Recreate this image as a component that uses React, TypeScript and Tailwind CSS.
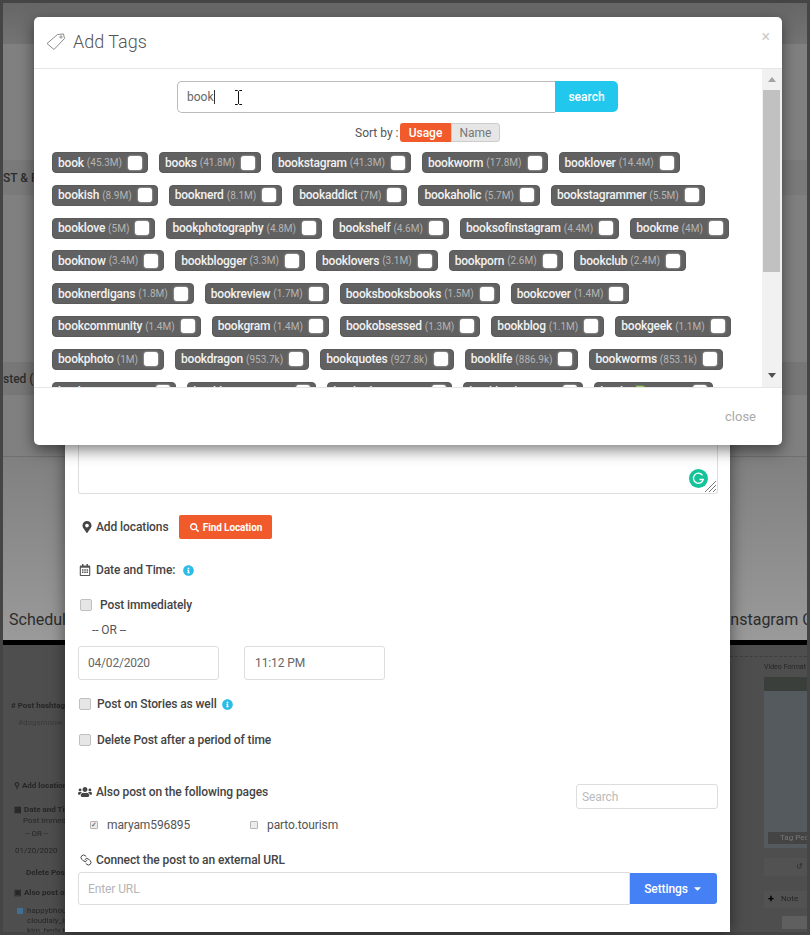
import { FaCaretDown, FaInfoCircle, FaMapMarkerAlt, FaRegCalendarAlt, FaSearch, FaUsers } from 'react-icons/fa'
import { Link as LinkIcon } from 'lucide-react'

type TagItem = { name: string; count: string }

const TAG_ROWS: TagItem[][] = [
  [
    { name: 'book', count: '45.3M' },
    { name: 'books', count: '41.8M' },
    { name: 'bookstagram', count: '41.3M' },
    { name: 'bookworm', count: '17.8M' },
    { name: 'booklover', count: '14.4M' },
  ],
  [
    { name: 'bookish', count: '8.9M' },
    { name: 'booknerd', count: '8.1M' },
    { name: 'bookaddict', count: '7M' },
    { name: 'bookaholic', count: '5.7M' },
    { name: 'bookstagrammer', count: '5.5M' },
  ],
  [
    { name: 'booklove', count: '5M' },
    { name: 'bookphotography', count: '4.8M' },
    { name: 'bookshelf', count: '4.6M' },
    { name: 'booksofinstagram', count: '4.4M' },
    { name: 'bookme', count: '4M' },
  ],
  [
    { name: 'booknow', count: '3.4M' },
    { name: 'bookblogger', count: '3.3M' },
    { name: 'booklovers', count: '3.1M' },
    { name: 'bookporn', count: '2.6M' },
    { name: 'bookclub', count: '2.4M' },
  ],
  [
    { name: 'booknerdigans', count: '1.8M' },
    { name: 'bookreview', count: '1.7M' },
    { name: 'booksbooksbooks', count: '1.5M' },
    { name: 'bookcover', count: '1.4M' },
  ],
  [
    { name: 'bookcommunity', count: '1.4M' },
    { name: 'bookgram', count: '1.4M' },
    { name: 'bookobsessed', count: '1.3M' },
    { name: 'bookblog', count: '1.1M' },
    { name: 'bookgeek', count: '1.1M' },
  ],
  [
    { name: 'bookphoto', count: '1M' },
    { name: 'bookdragon', count: '953.7k' },
    { name: 'bookquotes', count: '927.8k' },
    { name: 'booklife', count: '886.9k' },
    { name: 'bookworms', count: '853.1k' },
  ],
  [
    { name: 'bookstore', count: '820.1k' },
    { name: 'bookhaven', count: '801.5k' },
    { name: 'booktober', count: '790.2k' },
    { name: 'bookhaul', count: '774.6k' },
    { name: 'books📗', count: '760.3k' },
  ],
]

const TagChip = ({ tag }: { tag: TagItem }) => (
  <div className="flex h-[21px] items-center rounded-[4px] border border-[#5a5a5a] bg-[#616161] pl-[5px] pr-[5px] whitespace-nowrap">
    <span className="text-[12px] font-medium tracking-[-0.2px] text-[#f2f2f2]">{tag.name}</span>
    <span className="ml-[3px] text-[10px] text-[#b5b5b5]">({tag.count})</span>
    <span className="ml-[6px] size-[14px] rounded-[3px] bg-white shadow-[0_0_2px_rgba(255,255,255,0.8)]" />
  </div>
)

const FormCheck = () => (
  <span className="size-[12px] shrink-0 rounded-[2px] border border-[#c0c0c0] bg-[#e6e6e6]" />
)

const InfoDot = () => <FaInfoCircle className="size-[11px] text-[#2bbde8]" />

const TagOutline = () => (
  <svg width="20" height="18" viewBox="0 0 20 18" fill="none" stroke="#8a8a8a" strokeWidth="1">
    <path d="M1 10.5 11.5 1.5 17.5 1 18.5 5.5 8 16.5Z" strokeLinejoin="round" />
    <circle cx="15" cy="4" r="1.1" />
  </svg>
)

const GrammarlyBadge = () => (
  <svg width="19" height="19" viewBox="0 0 19 19">
    <circle cx="9.5" cy="9.5" r="9.5" fill="#15c39a" />
    <path d="M13.6 6.4A5 5 0 1 0 14.3 10.5H10.5" fill="none" stroke="white" strokeWidth="1.3" />
  </svg>
)

// the page sitting behind both dialogs
const Backdrop = () => (
  <div className="flex h-full flex-col overflow-hidden bg-[#808080] font-[Roboto,sans-serif] text-[#2c2c2c]">
    <div className="h-[41px] shrink-0 bg-gradient-to-b from-[#666666] to-[#747474]" />
    <div className="h-[116px] shrink-0" />
    <div className="flex h-[35px] shrink-0 items-center bg-[#7a7a7a] text-[12px] font-medium whitespace-nowrap">ST &amp; R</div>
    <div className="h-[167px] shrink-0" />
    <div className="flex h-[33px] shrink-0 items-center bg-[#777777] text-[12px] font-medium whitespace-nowrap">sted (</div>
    <div className="h-[62px] shrink-0 border-b border-[#707070]" />
    <div className="flex h-[183px] shrink-0 items-end justify-between bg-gradient-to-b from-[#808080] to-[#9a9a9a] pb-[9px] pl-[6px] text-[16px] leading-[22px] whitespace-nowrap">
      <span>Schedule</span>
      <span className="w-[77px] overflow-hidden">
        <span className="-ml-[4px] block">Instagram Carousel</span>
      </span>
    </div>
    <div className="h-[5px] shrink-0 bg-black" />
    <div className="flex min-h-0 flex-1 justify-between bg-[#4e4e4e] text-[8px] text-[#262626] whitespace-nowrap">
      <div className="flex w-[62px] flex-col overflow-hidden pl-[8px] pt-[55px] blur-[0.4px]">
        <span className="font-bold"># Post hashtags as</span>
        <span className="mt-[5px] pl-[7px] text-[#3a3a3a]">#dogsmonw</span>
        <span className="mt-[51px] pl-[3px] font-bold">⚲ Add locations</span>
        <span className="mt-[12px] pl-[3px] font-bold">▦ Date and Time:</span>
        <span className="-mt-px pl-[12px]">Post immediately</span>
        <span className="mt-px pl-[14px]">-- OR --</span>
        <span className="mt-[5px] pl-[4px]">01/20/2020</span>
        <span className="mt-[10px] pl-[15px] font-bold">Delete Post after</span>
        <span className="mt-[8px] pl-[3px] font-bold">▣ Also post on the</span>
        <span className="mt-[6px] flex items-center gap-[4px] pl-[6px]">
          <span className="size-[6px] shrink-0 bg-[#3f6f95]" />
          happybhound
        </span>
        <span className="-mt-[2px] pl-[16px]">cloudlaly_inf</span>
        <span className="-mt-[2px] pl-[16px]">kim_berly.hill</span>
      </div>
      <div className="flex w-[77px] flex-col items-end overflow-hidden pt-[11px] blur-[0.4px]">
        <div className="w-full border-t border-dashed border-[#3e3e3e]" />
        <span className="mt-[5px] w-[43px] text-[7px]">Video Format</span>
        <div className="mt-[4px] flex h-[171px] w-[43px] flex-col bg-[#555a5e]">
          <div className="h-[14px] bg-[#3a3f3c]" />
          <div className="flex-1" />
          <span className="mb-[4px] ml-[4px] bg-[#444444] pl-[12px] text-[#777777]">Tag People</span>
        </div>
        <div className="mt-[10px] flex h-[18px] w-[43px] items-center justify-end bg-[#525252] pr-[4px] text-[#2a2a2a]">↺</div>
        <div className="mt-[15px] flex h-[17px] w-[43px] items-center gap-[7px] bg-[#525252] pl-[4px]">
          <span className="text-[11px] font-bold text-black">+</span>
          Note
        </div>
        <div className="mt-[8px] h-[13px] w-[25px] bg-[#5f5f5f]" />
      </div>
    </div>
  </div>
)

const PostForm = () => (
  <div className="absolute left-[65px] top-[395px] flex h-[537px] w-[665px] flex-col bg-white px-[13px] font-[Roboto,sans-serif] text-[12px] tracking-[-0.1px] text-[#444444] shadow-[0_0_15px_rgba(0,0,0,0.5)]">
    {/* caption box, mostly hidden under the tags dialog */}
    <div className="relative h-[99px] w-[640px] shrink-0 rounded-b-[3px] border border-t-0 border-[#dddddd]">
      <span className="absolute bottom-[5px] right-[9px] flex">
        <GrammarlyBadge />
      </span>
      <svg className="absolute bottom-[1px] right-[1px]" width="11" height="11" viewBox="0 0 11 11" stroke="#555555" strokeWidth="0.8">
        <path d="M0 11 11 0M4 11 11 4M8 11 11 8" />
      </svg>
    </div>

    <div className="mt-[21px] flex h-[24px] shrink-0 items-center">
      <FaMapMarkerAlt className="ml-[3px] size-[12px] text-[#444444]" />
      <span className="ml-[3px] font-medium">Add locations</span>
      <button className="ml-[11px] flex h-[24px] w-[93px] items-center justify-center gap-[4px] rounded-[2px] bg-[#f15a2b] text-[10px] font-bold text-white">
        <FaSearch className="size-[9px]" />
        Find Location
      </button>
    </div>

    <div className="mt-[23px] flex h-[16px] shrink-0 items-center">
      <FaRegCalendarAlt className="ml-[1px] size-[12px] text-[#555555]" />
      <span className="ml-[5px] font-medium">Date and Time:</span>
      <span className="ml-[8px]"><InfoDot /></span>
    </div>

    <div className="mt-[19px] flex h-[16px] shrink-0 items-center">
      <span className="ml-[2px] flex"><FormCheck /></span>
      <span className="ml-[8px] font-medium">Post immediately</span>
    </div>

    <div className="mt-[9px] h-[16px] shrink-0 pl-[14px] leading-[16px] text-[#555555]">-- OR --</div>

    <div className="mt-[8px] flex shrink-0 gap-[25px]">
      <input readOnly defaultValue="04/02/2020" className="h-[34px] w-[141px] rounded-[3px] border border-[#dddddd] px-[9px] text-[12px] tracking-[-0.2px] text-[#666666]" />
      <input readOnly defaultValue="11:12 PM" className="h-[34px] w-[141px] rounded-[3px] border border-[#dddddd] px-[10px] text-[12px] text-[#666666]" />
    </div>

    <div className="mt-[16px] flex h-[16px] shrink-0 items-center">
      <span className="ml-[1px] flex"><FormCheck /></span>
      <span className="ml-[6px] font-medium">Post on Stories as well</span>
      <span className="ml-[5px]"><InfoDot /></span>
    </div>

    <div className="mt-[20px] flex h-[16px] shrink-0 items-center">
      <span className="ml-[1px] flex"><FormCheck /></span>
      <span className="ml-[6px] font-medium">Delete Post after a period of time</span>
    </div>

    <div className="mt-[36px] flex h-[25px] w-[640px] shrink-0 items-start justify-between">
      <div className="flex h-[16px] items-center">
        <FaUsers className="size-[14px] text-[#444444]" />
        <span className="ml-[4px] font-medium">Also post on the following pages</span>
      </div>
      <input placeholder="Search" className="h-[25px] w-[142px] rounded-[3px] border border-[#dddddd] px-[5px] text-[12px] placeholder:text-[#bbbbbb]" />
    </div>

    <div className="mt-[8px] flex h-[16px] shrink-0 items-center text-[#555555]">
      <span className="ml-[12px] flex size-[8px] items-center justify-center rounded-[1px] border border-[#b5b5b5] bg-[#ececec] text-[7px] leading-none text-[#444444]">✓</span>
      <span className="ml-[9px] w-[143px]">maryam596895</span>
      <span className="size-[8px] rounded-[1px] border border-[#b5b5b5] bg-[#ececec]" />
      <span className="ml-[9px]">parto.tourism</span>
    </div>

    <div className="mt-[19px] flex h-[16px] shrink-0 items-center">
      <LinkIcon className="ml-[2px] size-[12px] -scale-x-100 text-[#444444]" strokeWidth={2} />
      <span className="ml-[4px] font-medium">Connect the post to an external URL</span>
    </div>

    <div className="mt-[4px] flex h-[33px] w-[639px] shrink-0">
      <input placeholder="Enter URL" className="h-[33px] w-[552px] rounded-l-[3px] border border-[#dddddd] px-[9px] text-[12px] placeholder:text-[#b5b5b5]" />
      <button className="flex h-[31px] flex-1 items-center justify-center gap-[4px] self-center rounded-r-[3px] bg-[#4680f5] text-[12px] font-medium text-white">
        Settings
        <FaCaretDown className="size-[11px]" />
      </button>
    </div>
  </div>
)

const TagsDialog = () => (
  <div className="absolute left-[34px] top-[17px] flex h-[428px] w-[748px] flex-col overflow-hidden rounded-[5px] bg-white font-[Roboto,sans-serif] shadow-[0_5px_15px_rgba(0,0,0,0.5)]">
    <div className="flex h-[52px] shrink-0 items-center border-b border-[#e5e5e5] pb-[2px] pl-[12px] pr-[12px]">
      <TagOutline />
      <h2 className="ml-[7px] text-[18px] font-light text-[#555555]">Add Tags</h2>
      <span className="mb-[10px] ml-auto text-[16px] leading-none text-[#cccccc]">×</span>
    </div>

    <div className="flex h-[318px] shrink-0">
      <div className="min-w-0 flex-1 overflow-hidden pt-[12px]">
        <div className="-ml-px flex justify-center">
          <div className="relative flex h-[32px] w-[378px] items-center rounded-l-[5px] border border-r-0 border-[#bbbbbb] pl-[9px] text-[12px] text-[#666666]">
            book
            <span className="h-[14px] w-px bg-[#333333]" />
            {/* text cursor captured with the screenshot */}
            <svg className="absolute left-[56px] top-[8px]" width="9" height="15" viewBox="0 0 9 15" fill="none" stroke="#111111" strokeWidth="1">
              <path d="M1 .5H3.5L4.5 1.5 5.5 .5H8M4.5 1.5V13.5M1 14.5H3.5L4.5 13.5 5.5 14.5H8" />
            </svg>
          </div>
          <button className="h-[31px] w-[63px] rounded-r-[5px] bg-[#22c7ee] text-[12px] font-medium text-white">search</button>
        </div>

        <div className="ml-[321px] mt-[10px] flex h-[19px] items-center text-[12px]">
          <span className="w-[45px] text-[#555555]">Sort by :</span>
          <span className="flex h-[19px] w-[51px] items-center justify-center rounded-l-[3px] bg-[#f15a2b] font-medium text-white">Usage</span>
          <span className="flex h-[19px] w-[49px] items-center justify-center rounded-r-[3px] border border-[#cccccc] bg-[#e6e6e6] text-[#777777]">Name</span>
        </div>

        <div className="mt-[10px] flex flex-col gap-y-[11.8px] pl-[18px]">
          {TAG_ROWS.map((row) => (
            <div key={row[0].name} className="flex gap-x-[11px]">
              {row.map((tag) => (
                <TagChip key={tag.name} tag={tag} />
              ))}
            </div>
          ))}
        </div>
      </div>

      {/* scrollbar */}
      <div className="flex w-[20px] shrink-0 flex-col items-end bg-[#f1f1f1] pr-[2px]">
        <div className="flex h-[21px] w-[17px] items-center justify-center">
          <span className="border-x-[4px] border-b-[5px] border-x-transparent border-b-[#a3a3a3]" />
        </div>
        <div className="h-[182px] w-[17px] bg-[#c1c1c1]" />
        <div className="flex-1" />
        <div className="flex h-[24px] w-[17px] items-center justify-center">
          <span className="border-x-[4px] border-t-[5px] border-x-transparent border-t-[#505050]" />
        </div>
      </div>
    </div>

    <div className="flex flex-1 items-center justify-end border-t border-[#e5e5e5] pr-[26px] text-[13px] text-[#aaaaaa]">close</div>
  </div>
)

export default function App() {
  return (
    <div className="relative h-[935px] w-[810px] overflow-hidden bg-[#454545] p-[3px]">
      <Backdrop />
      <PostForm />
      <TagsDialog />
    </div>
  )
}
